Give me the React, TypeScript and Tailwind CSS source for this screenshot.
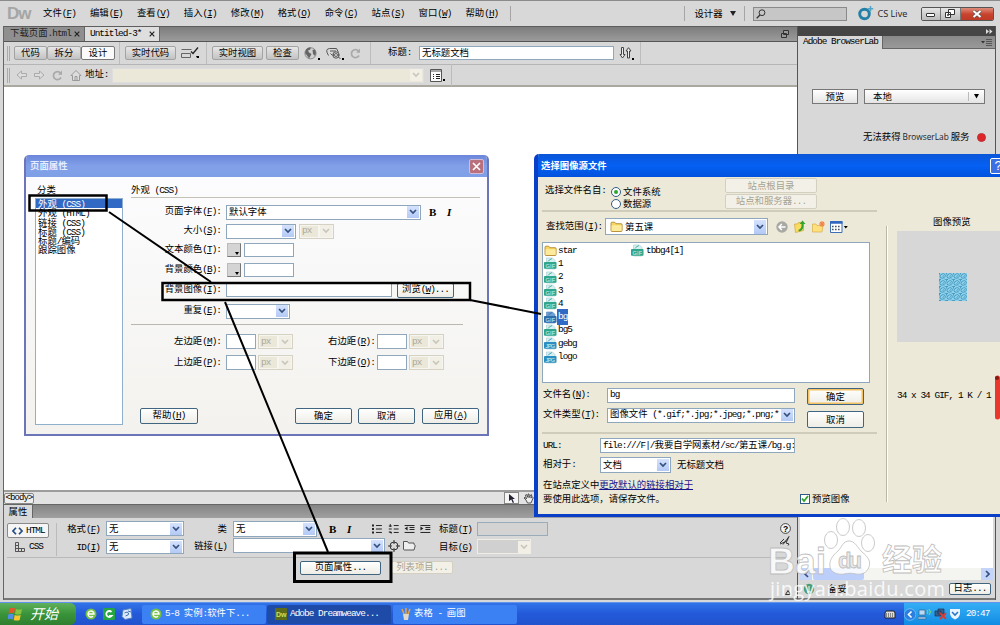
import React from 'react';
import clsx from 'clsx';

const menus = ['文件(F)', '编辑(E)', '查看(V)', '插入(I)', '修改(M)', '格式(O)', '命令(C)', '站点(S)', '窗口(W)', '帮助(H)'];
const categories = ['外观 (CSS)', '外观 (HTML)', '链接 (CSS)', '标题 (CSS)', '标题/编码', '跟踪图像'];
const files = [
  { name: 'star', kind: 'DIR' },
  { name: '1', kind: 'GIF' },
  { name: '2', kind: 'GIF' },
  { name: '3', kind: 'GIF' },
  { name: '4', kind: 'GIF' },
  { name: 'bg', kind: 'GIF', selected: true },
  { name: 'bg5', kind: 'GIF' },
  { name: 'gebg', kind: 'JPG' },
  { name: 'logo', kind: 'JPG' },
];

interface BoxProps {
  className?: string;
  children?: React.ReactNode;
}

// Half-width runs are set in a tightened mono so two letters equal one Han character.
// A single letter in parentheses is the access key.
function Txt({ children, className }: { children: string; className?: string }) {
  const parts = children.split(/([\x20-\x7e]+)/);
  return (
    <span className={clsx('pb-[2px] whitespace-pre', className)}>
      {parts.map((part, i) => {
        if (i % 2 === 0) return part;
        const key = part.match(/^(.*\()([A-Z])(\).*)$/);
        return (
          <span key={i} className="font-['Liberation_Mono',monospace] tracking-[-0.1em]">
            {key ? (
              <>
                {key[1]}
                <span className="underline underline-offset-1">{key[2]}</span>
                {key[3]}
              </>
            ) : (
              part
            )}
          </span>
        );
      })}
    </span>
  );
}

function Chevron({ disabled, className }: { disabled?: boolean; className?: string }) {
  return (
    <span
      className={clsx(
        'flex shrink-0 items-center justify-center',
        disabled ? 'bg-[#f1efe6]' : 'bg-linear-to-b from-[#d5e2fd] to-[#b3c9f5]',
        className || 'h-[12px] w-[12px]'
      )}
    >
      <svg width="8" height="6" viewBox="0 0 8 6" fill="none" stroke={disabled ? '#c9c7ba' : '#34507f'} strokeWidth="1.7">
        <path d="M1 1l3 3 3-3" />
      </svg>
    </span>
  );
}

function Select({ value, className }: { value?: string; className?: string }) {
  return (
    <div className={clsx('flex shrink-0 items-center justify-between overflow-hidden border border-[#8fa7bd] bg-white pr-px pl-[2px]', className)}>
      <Txt>{value || ''}</Txt>
      <Chevron />
    </div>
  );
}

function Unit({ className }: BoxProps) {
  return (
    <div className={clsx('flex h-[15px] w-[35px] shrink-0 items-center justify-between border border-[#d5d2c4] bg-[#f6f5ef] pr-px pl-px text-[#aaa89a]', className)}>
      <span className="flex h-[11px] w-[17px] items-center bg-[#ebe8d9] pl-px">
        <Txt>px</Txt>
      </span>
      <Chevron disabled />
    </div>
  );
}

function Input({ className, children }: BoxProps) {
  return (
    <div className={clsx('flex shrink-0 items-center overflow-hidden border border-[#8fa7bd] bg-white pl-[2px]', className)}>{children}</div>
  );
}

function XpButton({ className, children }: { className?: string; children: string }) {
  return (
    <button
      className={clsx(
        'flex shrink-0 items-center justify-center rounded-[2px] border border-[#3f6580] bg-linear-to-b from-white to-[#eeede6]',
        className
      )}
    >
      <Txt>{children}</Txt>
    </button>
  );
}

function DimButton({ className, children }: { className?: string; children: string }) {
  return (
    <div className={clsx('flex shrink-0 items-center justify-center rounded-[2px] border border-[#d3d0c1] bg-[#f3f1e7] text-[#a5a394]', className)}>
      <Txt>{children}</Txt>
    </div>
  );
}

function ToolButton({ className, children }: BoxProps) {
  return (
    <div className={clsx('flex h-[14px] shrink-0 items-center justify-center rounded-[2px] border border-[#a3a3a3] bg-linear-to-b from-[#e6e6e6] to-[#c3c3c3]', className)}>
      {children}
    </div>
  );
}

function Sep({ className }: BoxProps) {
  return <div className={clsx('w-px shrink-0 bg-[#a5a5a5]', className)} />;
}

function Grip() {
  return <div className="ml-[3px] h-[15px] w-[3px] shrink-0 border-x border-[#aaa]" />;
}

function BoldItalic({ className }: BoxProps) {
  return (
    <div className={clsx("flex items-center font-['Liberation_Serif',serif] text-[11px] leading-none", className)}>
      <span className="w-[18px] font-black">B</span>
      <span className="font-bold italic">I</span>
    </div>
  );
}

function Swatch() {
  return (
    <div className="flex h-[14px] w-[14px] shrink-0 items-end justify-end border border-t-[#bbb] border-r-[#777] border-b-[#777] border-l-[#bbb] bg-[#d4d4d4] p-px">
      <svg width="4" height="3" viewBox="0 0 4 3">
        <path d="M0 0h4L2 3z" />
      </svg>
    </div>
  );
}

function Folder({ size = 13 }: { size?: number }) {
  return (
    <svg width={size} height={size} viewBox="0 0 13 13" className="shrink-0">
      <path d="M1 3.2q0-1 1-1h2.700l1.200 1.500h5.200q1 0 1 1v5.800q0 1-1 1H2q-1 0-1-1z" fill="#f7d661" stroke="#a97e1f" strokeWidth=".8" />
      <path d="M1.600 5.200h10v5.200q0 .6-.6.600h-8.800q-.6 0-.6-.6z" fill="#fdeb9b" />
    </svg>
  );
}

function FileIcon({ kind, selected }: { kind: string; selected?: boolean }) {
  if (kind === 'DIR') return <Folder />;
  const label = selected ? '#2e6cae' : kind === 'GIF' ? '#2fa58c' : '#2a8fc0';
  return (
    <svg width="13" height="13" viewBox="0 0 13 13" className="shrink-0">
      <path d="M2.500 1h6l2.500 2.500V12h-8.500z" fill={selected ? '#6fa0d4' : '#d8eff2'} stroke={selected ? '#4b7fbb' : '#9cc9cf'} strokeWidth=".6" />
      <path d="M4 4.500c1-2 3-2 4-3" stroke={label} strokeWidth=".8" fill="none" />
      <rect x="0" y="5" width="12.500" height="6.800" rx=".8" fill={label} />
      <text x="6.300" y="10.500" textAnchor="middle" fontSize="5.600" fontFamily="Liberation Sans" fill="#dff5ef" textLength="9.500">
        {kind}
      </text>
    </svg>
  );
}

function Refresh() {
  return (
    <svg width="11" height="11" viewBox="0 0 11 11" fill="none" stroke="#a9a9a9" strokeWidth="1.700">
      <path d="M9 7.500A4 4 0 1 1 8.500 3" />
      <path d="M10 .5v4.200H6z" fill="#a9a9a9" stroke="none" />
    </svg>
  );
}

function TinyDown({ className }: BoxProps) {
  return <span className={clsx('h-[2px] w-[2px] shrink-0 self-end bg-black', className || 'mb-[4px]')} />;
}

function MenuBar() {
  return (
    <div className="flex h-[26px] shrink-0 items-center border-t border-[#8b8b8b] bg-[#d8d8d8]">
      <div className="w-[43px] pl-[7px] font-['Liberation_Sans',sans-serif] text-[17px] leading-none font-bold tracking-[-1px] text-[#a5a5a5]">Dw</div>
      {menus.map(m => (
        <div key={m} className="flex w-[46.95px] shrink-0">
          <Txt>{m}</Txt>
        </div>
      ))}
      <Sep className="-ml-[2px] h-[15px]" />
      <Sep className="ml-[173px] h-[15px]" />
      <Txt className="ml-[9px]">设计器</Txt>
      <svg className="ml-[7px]" width="6" height="5" viewBox="0 0 6 5">
        <path d="M0 0h6L3 5z" fill="#222" />
      </svg>
      <Sep className="ml-[8px] h-[15px]" />
      <div className="ml-[8px] flex h-[14px] w-[94px] items-center border border-[#8a8a8a] bg-[#c6c6c6] pl-[2px]">
        <svg width="10" height="10" viewBox="0 0 10 10" fill="none" stroke="#333">
          <circle cx="6" cy="3.700" r="2.900" />
          <path d="M4 6L.7 9.300" strokeWidth="1.300" />
        </svg>
      </div>
      <svg className="ml-[11px]" width="16" height="15" viewBox="0 0 16 15">
        <circle cx="6.500" cy="8" r="4.800" fill="none" stroke="#2580a7" strokeWidth="2.900" />
        <path d="M12.500 0v5.500M9.800 2.700h5.400" stroke="#53a3c4" strokeWidth="1.500" />
      </svg>
      <span className="ml-[4px] w-[30px] font-['Open_Sans',sans-serif] text-[9.100px] whitespace-nowrap text-[#222]">CS Live</span>
      <div className="ml-[13px] flex h-[14px] w-[73px] shrink-0 overflow-hidden rounded-[2px] border border-[#555]">
        <div className="flex w-[19px] items-center justify-center border-r border-[#777] bg-linear-to-b from-[#e6e6e6] to-[#bbb]">
          <span className="mt-[2px] h-[4px] w-[9px] rounded-[1px] border border-[#333] bg-white" />
        </div>
        <div className="flex w-[20px] items-center justify-center border-r border-[#777] bg-linear-to-b from-[#e6e6e6] to-[#bbb]">
          <svg width="10" height="9" viewBox="0 0 10 9" fill="#fff" stroke="#333">
            <path d="M3.500.5h6v5h-6zM.5 3.500h5v5h-5z" />
            <path d="M2.500 5.500h1v1h-1z" />
          </svg>
        </div>
        <div className="flex flex-1 items-center justify-center bg-linear-to-b from-[#dd8c7c] via-[#c9442e] to-[#bd3a26]">
          <svg width="10" height="8" viewBox="0 0 10 8">
            <path d="M1.500 1l7 6M8.500 1l-7 6" stroke="#555" strokeWidth="3.200" />
            <path d="M1.500 1l7 6M8.500 1l-7 6" stroke="#fff" strokeWidth="2" />
          </svg>
        </div>
      </div>
    </div>
  );
}

function TabClose() {
  return (
    <svg className="mr-[4px] ml-auto" width="6" height="6" viewBox="0 0 6 6" stroke="#222" strokeWidth="1.200">
      <path d="M.7.7l4.600 4.600M5.300.7L.7 5.300" />
    </svg>
  );
}

function DocumentTabs() {
  return (
    <div className="flex h-[16px] shrink-0 border-t border-b border-t-[#5e5e5e] border-b-[#555] bg-linear-to-b from-[#7d7d7d] to-[#9b9b9b]">
      <div className="flex w-[81px] items-center border-r border-[#666] bg-[#8f8f8f] pl-[6px] text-[#222]">
        <Txt>下载页面.html</Txt>
        <TabClose />
      </div>
      <div className="flex w-[75px] items-center border-r border-[#666] bg-[#dedede] pl-[5px]">
        <Txt>Untitled-3*</Txt>
        <TabClose />
      </div>
      <svg className="mt-[3px] mr-[8px] ml-auto" width="8" height="8" viewBox="0 0 8 8" fill="#9a9a9a" stroke="#333">
        <path d="M2.500.5h5v4h-5zM.5 3.500h5v4h-5z" />
      </svg>
    </div>
  );
}

function Toolbars() {
  return (
    <>
      <div className="flex h-[23px] shrink-0 items-center border-b border-[#b5b5b5] bg-[#d8d8d8]">
        <Grip />
        <ToolButton className="ml-[4px] w-[33px]"><Txt>代码</Txt></ToolButton>
        <ToolButton className="w-[34px]"><Txt>拆分</Txt></ToolButton>
        <div className="flex h-[14px] w-[34px] items-center justify-center rounded-[2px] border border-[#777] bg-[#fafafa]"><Txt>设计</Txt></div>
        <Sep className="ml-[4px] h-[22px] bg-[#bcbcbc]" />
        <ToolButton className="ml-[5px] w-[51px]"><Txt>实时代码</Txt></ToolButton>
        <svg className="ml-[5px]" width="18" height="12" viewBox="0 0 18 12" fill="none" stroke="#666">
          <path d="M.5 2.500h10M.5 6.500h9v4h-9z" />
          <path d="M10 4.500l2 2 5-6" stroke="#222" strokeWidth="1.300" />
          <path d="M15 9h3v2h-2z" fill="#000" stroke="none" />
        </svg>
        <Sep className="ml-[7px] h-[22px] bg-[#bcbcbc]" />
        <ToolButton className="ml-[5px] w-[51px]"><Txt>实时视图</Txt></ToolButton>
        <ToolButton className="ml-[3px] w-[33px]"><Txt>检查</Txt></ToolButton>
        <svg className="ml-[5px]" width="14" height="13" viewBox="0 0 14 13">
          <circle cx="6.500" cy="6.300" r="5.600" fill="#d0d0d0" stroke="#777" strokeWidth=".8" />
          <path d="M2 2.500q2-2.500 5-1.800l-1 2-2 .8 1 2 2.500 1.500-1 2-1.500 2.500-2-3L1 6zM8.500 3l2.500-.5 1 3.500-1 3-2-2z" fill="#666" />
        </svg>
        <TinyDown />
        <svg className="ml-[6px]" width="16" height="13" viewBox="0 0 16 13" fill="none" stroke="#555">
          <path d="M2.500 8.500q-4-6.500 1-7h7l2 4M4 4h6M4.500 6.500l2 2" />
          <circle cx="10" cy="8" r="3.200" fill="#ddd" />
          <path d="M7 8q3-3 6 0-3 3-6 0M12.500 10l2 2" />
        </svg>
        <TinyDown />
        <div className="ml-[6px]"><Refresh /></div>
        <Sep className="ml-[9px] h-[22px] bg-[#bcbcbc]" />
        <Txt className="ml-[17px] w-[30px]">标题:</Txt>
        <Input className="ml-px h-[14px] w-[195px] pl-0"><Txt className="-mt-px leading-[10px]">无标题文档</Txt></Input>
        <svg className="ml-[5px]" width="13" height="12" viewBox="0 0 13 12" fill="#eee" stroke="#444">
          <path d="M2.500.5h2v7h1.500l-2.500 3.500L1 7.500h1.500zM8.500 11h2V4h1.500L9.500.7 7 4h1.500z" />
        </svg>
        <TinyDown />
        <Sep className="ml-[6px] h-[22px] bg-[#bcbcbc]" />
      </div>
      <div className="flex h-[22px] shrink-0 items-center border-b-2 border-[#aaa89f] bg-[#d8d8d8]">
        <Grip />
        <svg className="ml-[6px]" width="29" height="10" viewBox="0 0 29 10" fill="#ddd" stroke="#aaa">
          <path d="M1 5l4.500-4v2.500h5v3h-5V9zM28 5l-4.500-4v2.500h-5v3h5V9z" />
        </svg>
        <div className="ml-[7px]"><Refresh /></div>
        <svg className="ml-[7px]" width="12" height="11" viewBox="0 0 12 11" fill="#ddd" stroke="#999">
          <path d="M1 5.500l5-5 5 5H9.500v5h-7v-5zM5 10.500v-4h2v4" />
        </svg>
        <Txt className="ml-[3px] w-[27px]">地址:</Txt>
        <div className="flex h-[15px] w-[312px] items-center justify-end border border-[#ddd] bg-[#ebe8d9] pr-px"><Chevron disabled /></div>
        <svg className="ml-[6px]" width="13" height="13" viewBox="0 0 13 13" fill="#fafafa" stroke="#555">
          <path d="M.5.5h11v12H.5zM1 2h10" />
          <path d="M3 5.500h1M6 5.500h4M3 7.500h1M6 7.500h4M3 9.500h1M6 9.500h4" stroke="#222" />
        </svg>
        <TinyDown />
        <Sep className="ml-[6px] h-[22px] bg-[#bcbcbc]" />
      </div>
    </>
  );
}

function PropertiesPanel() {
  return (
    <>
      <div className="flex h-[14px] shrink-0 items-center border-t-2 border-[#9c9c9c] bg-[#e2e2e2]">
        <div className="flex h-[11px] w-[30px] items-center justify-center rounded-[2px] border border-[#888] bg-[#eee]"><Txt className="text-[9px]">{'<body>'}</Txt></div>
        <div className="ml-[470px] flex h-[12px] w-[15px] items-center justify-center border border-[#888] bg-[#f5f5f5]">
          <svg width="6" height="9" viewBox="0 0 6 9"><path d="M0 0l6 5H3.500L5 8.500l-1.200.5L2.300 5.600 0 7z" fill="#223" /></svg>
        </div>
        <svg className="ml-[4px]" width="11" height="11" viewBox="0 0 11 11" fill="#eee" stroke="#444" strokeWidth=".9">
          <path d="M3 7L1 5l1-.7L3.500 6 2.500 2l1-.5L5 4.500V1h1l.3 3.500L8 1.500l.8.500-1 3L9.500 4l.8.500L8 10H4.500z" />
        </svg>
      </div>
      <div className="flex h-[14px] shrink-0 border-t border-[#666] bg-linear-to-b from-[#858585] to-[#a0a0a0]">
        <div className="flex w-[29px] items-center justify-center border-r border-[#666] bg-[#d8d8d8]"><Txt>属性</Txt></div>
      </div>
      <div className="flex h-[82px] shrink-0 flex-col border-b-2 border-[#777] bg-[#d8d8d8] pr-[6px] pl-[3px]">
        <div className="flex h-[40px] shrink-0 border-b border-[#b9b9b9]">
          <div className="w-[42px] pt-[5px]">
            <div className="flex h-[15px] items-center gap-[3px] rounded-[2px] border border-[#8a8a8a] bg-[#f5f5f5] pl-[4px]">
              <svg width="11" height="8" viewBox="0 0 11 8" fill="none" stroke="#264e82" strokeWidth="1.700"><path d="M4 .7L1 4l3 3.300M7 .7L10 4 7 7.300" /></svg>
              <Txt>HTML</Txt>
            </div>
            <div className="flex h-[17px] items-center gap-[4px] pl-[7px]">
              <svg width="11" height="10" viewBox="0 0 11 10" fill="none" stroke="#555"><path d="M1.500.5h3v9h-3zM1.500 3.500h3M1.500 6.500h9v3h-9M7.500 6.500v3" /></svg>
              <Txt>CSS</Txt>
            </div>
          </div>
          <Sep className="mt-[5px] ml-[7px] h-[33px] bg-[#bbb]" />
          <div className="w-[43px] text-right">
            <div className="mt-[3px] h-[15px] leading-[14px]"><Txt>格式(F)</Txt></div>
            <div className="mt-[3px] h-[15px] leading-[14px]"><Txt>ID(I)</Txt></div>
          </div>
          <div className="ml-[6px] pt-[3px]">
            <Select value="无" className="h-[15px] w-[78px]" />
            <Select value="无" className="mt-[3px] h-[15px] w-[78px]" />
          </div>
          <div className="w-[43px] text-right">
            <div className="mt-[3px] h-[15px] leading-[14px]"><Txt>类</Txt></div>
            <div className="mt-[2px] h-[15px] leading-[14px]"><Txt>链接(L)</Txt></div>
          </div>
          <div className="ml-[6px] flex w-[200px] flex-col pt-[3px]">
            <div className="flex items-center">
              <Select value="无" className="h-[16px] w-[84px]" />
              <BoldItalic className="ml-[12px] w-[24px]" />
              <svg className="ml-[19px]" width="62" height="10" viewBox="0 0 62 10" stroke="#222" fill="#222">
                <path d="M0 1.500h2M0 5h2M0 8.500h2" strokeWidth="2" />
                <path d="M4 1.500h6M4 5h6M4 8.500h6M22 1.500h5M22 5h5M22 8.500h5M17 2h3M18.500 0v3M17 5h3M17 8h2.500v1.500" />
                <path d="M33 1.500h10M38 3.500h5M38 5.500h5M33 8.500h10M49 1.500h10M54 3.500h5M54 5.500h5M49 8.500h10" />
                <path d="M36 2.500v4L33 4.500zM49 2.500v4l3-2z" stroke="none" />
              </svg>
            </div>
            <div className="mt-px flex items-center">
              <Select className="h-[15px] w-[152px]" />
              <svg className="ml-[3px]" width="12" height="12" viewBox="0 0 12 12" fill="none" stroke="#333">
                <circle cx="6" cy="6" r="4" />
                <path d="M6 0v4M6 8v4M0 6h4M8 6h4" />
              </svg>
              <svg className="ml-[3px]" width="13" height="11" viewBox="0 0 13 11" fill="#eee" stroke="#555">
                <path d="M.5 9.500v-8h4l1 1.500h5.500v1.500l1.300 1L11 10H1z" />
              </svg>
            </div>
          </div>
          <div className="ml-[6px] w-[38px]">
            <div className="mt-[3px] h-[15px] leading-[14px]"><Txt>标题(T)</Txt></div>
            <div className="mt-[3px] h-[15px] leading-[14px]"><Txt>目标(G)</Txt></div>
          </div>
          <div className="pt-[4px]">
            <div className="h-[14px] w-[71px] border border-[#9aabba] bg-[#d3d3d3]" />
            <div className="mt-[3px] flex h-[15px] w-[54px] items-center justify-end border border-[#f0eee4] bg-[#d0d0d0]"><Chevron disabled /></div>
          </div>
          <div className="ml-auto flex w-[12px] flex-col items-center pt-[5px]">
            <svg width="11" height="11" viewBox="0 0 11 11">
              <circle cx="5.500" cy="5.500" r="4.900" fill="#f4f4f4" stroke="#333" strokeWidth=".9" />
              <text x="5.500" y="8.500" textAnchor="middle" fontSize="8.500" fontWeight="bold" fontFamily="Liberation Sans">?</text>
            </svg>
            <svg className="mt-[2px]" width="12" height="10" viewBox="0 0 12 10" fill="#ddd" stroke="#333"><path d="M1 8l5-2 4-5.500L7 7l3 1-1 1.500M1 7l4-4M4 8.500l3-4" /></svg>
          </div>
        </div>
        <div className="flex pt-[3px]">
          <XpButton className="ml-[293px] h-[14px] w-[81px]">页面属性...</XpButton>
          <DimButton className="ml-[10px] h-[13px] w-[62px]">列表项目...</DimButton>
        </div>
        <svg className="mt-auto mb-[3px] ml-auto" width="6" height="5" viewBox="0 0 6 5" stroke="#333" fill="none"><path d="M.5 4.500l2.500-4 2.500 4z" /></svg>
      </div>
    </>
  );
}

function BrowserLabPanel() {
  return (
    <div className="flex w-[199px] shrink-0 flex-col border-r border-l border-[#555] bg-[#d8d8d8]">
      <div className="flex h-[10px] shrink-0 items-center justify-end bg-[#454545] pr-[2px]">
        <svg width="7" height="5" viewBox="0 0 7 5" fill="#ddd"><path d="M0 0l3 2.500L0 5zM3.500 0l3 2.500-3 2.500z" /></svg>
      </div>
      <div className="flex h-[13px] shrink-0 items-center border-b border-[#666] bg-linear-to-b from-[#888] to-[#999]">
        <div className="flex h-[13px] w-[85px] items-center border-r border-[#666] bg-[#d8d8d8] pl-[5px]"><Txt>Adobe BrowserLab</Txt></div>
        <svg className="mr-[3px] ml-auto" width="11" height="7" viewBox="0 0 11 7" stroke="#555"><path d="M0 2h4L2 4.500z" fill="#333" stroke="none" /><path d="M5 .5h6M5 2.500h6M5 4.500h6M5 6.500h6" /></svg>
      </div>
      <div className="mt-[40px] flex gap-[6px] pl-[14px]">
        <div className="flex h-[15px] w-[46px] items-center justify-center border border-[#777] bg-linear-to-b from-white to-[#e4e4e4]"><Txt>预览</Txt></div>
        <div className="flex h-[15px] w-[121px] items-center border border-[#777] bg-linear-to-b from-white to-[#e4e4e4] pl-[8px]">
          <Txt>本地</Txt>
          <Sep className="ml-auto h-[9px] bg-[#bbb]" />
          <svg className="mx-[5px]" width="5" height="5" viewBox="0 0 5 5"><path d="M0 0h5L2.500 4.500z" /></svg>
        </div>
      </div>
      <div className="mt-[26px] flex items-center pl-[65px] whitespace-nowrap">
        <Txt>无法获得</Txt>
        <span className="mx-[2px] font-['Open_Sans',sans-serif] text-[8.300px] text-[#222]">BrowserLab</span>
        <Txt>服务</Txt>
        <span className="ml-[8px] h-[9px] w-[9px] rounded-full border border-[#b33] bg-[#e0252a]" />
      </div>
      <div className="mt-auto flex h-[83px] flex-col">
        <div className="mx-[2px] flex h-[63px] flex-col bg-white">
          <div className="mt-auto flex h-[12px] bg-[#f4f4f0]">
            <div className="flex w-[12px] items-center justify-center bg-[#c5d5fa] text-[#34507f]"><svg width="5" height="8" viewBox="0 0 5 8" fill="none" stroke="#34507f" strokeWidth="1.700"><path d="M4 1L1 4l3 3" /></svg></div>
            <div className="ml-px w-[51px] rounded-[2px] bg-[#bccffa]" />
            <div className="ml-auto flex w-[12px] items-center justify-center bg-[#c5d5fa]"><svg width="5" height="8" viewBox="0 0 5 8" fill="none" stroke="#34507f" strokeWidth="1.700"><path d="M1 1l3 3-3 3" /></svg></div>
          </div>
        </div>
        <div className="flex h-[20px] items-center border-b-2 border-[#777] pr-[4px]">
          <svg className="ml-[5px]" width="12" height="12" viewBox="0 0 11 12"><circle cx="5.500" cy="6" r="5.200" fill="#4d9c78" /><path d="M5.500 3v6M3.500 9h4" stroke="#fff" /></svg>
          <Txt className="ml-[13px]">备妥</Txt>
          <XpButton className="ml-auto h-[12px] w-[42px]">日志...</XpButton>
        </div>
      </div>
    </div>
  );
}

function Field({ label, className, children }: { label: string; className: string; children: React.ReactNode }) {
  return (
    <div className={clsx('flex shrink-0 items-center', className)}>
      <div className="flex w-[90px] shrink-0 justify-end"><Txt>{label}</Txt></div>
      <div className="ml-[5px] flex items-center">{children}</div>
    </div>
  );
}

function PagePropertiesDialog() {
  return (
    <div className="absolute top-[155px] left-[24px] flex h-[281px] w-[465px] flex-col overflow-hidden rounded-t-[5px] border-x-2 border-b-2 border-[#6d75b9]">
      <div className="flex h-[22px] shrink-0 items-center justify-between bg-linear-to-b from-[#6b86da] via-[#82a0e8] to-[#7e9fe6] pr-[3px] pl-[4px] font-bold text-[#e4ecff]">
        <Txt>页面属性</Txt>
        <div className="flex h-[15px] w-[15px] items-center justify-center rounded-[2px] border border-[#d3bcd9] bg-[#b9707d]">
          <svg width="9" height="9" viewBox="0 0 9 9" stroke="#fff" strokeWidth="1.600"><path d="M1 1l7 7M8 1L1 8" /></svg>
        </div>
      </div>
      <div className="flex flex-1 bg-linear-to-b from-[#fcfcfe] to-[#f3f2ee]">
        <div className="w-[97px] shrink-0 pl-[9px]">
          <div className="mt-[6px] h-[15px] pl-[2px] leading-[12px]"><Txt>分类</Txt></div>
          <div className="h-[227px] w-[88px] border border-[#8fb0cc] bg-white leading-[9.300px]">
            {categories.map((c, i) => (
              <div key={c} className={clsx('h-[9.300px] pl-[2px]', i === 0 && 'bg-[#316ac5] text-white')}><Txt>{c}</Txt></div>
            ))}
          </div>
        </div>
        <div className="flex w-[360px] flex-col pl-[8px]">
          <div className="mt-[6px] h-[15px] w-[349px] border-b border-[#c4c2b8] leading-[12px]"><Txt>外观 (CSS)</Txt></div>
          <div className="h-[4px]" />
          <Field label="页面字体(F):" className="h-[20px]">
            <Select value="默认字体" className="h-[15px] w-[195px]" />
            <BoldItalic className="ml-[8px]" />
          </Field>
          <Field label="大小(S):" className="h-[18px]">
            <Select className="h-[15px] w-[70px]" />
            <Unit className="ml-[3px]" />
          </Field>
          <Field label="文本颜色(T):" className="h-[20px]">
            <div className="mr-[3px] pl-px"><Swatch /></div>
            <Input className="h-[14px] w-[50px]" />
          </Field>
          <Field label="背景颜色(B):" className="h-[20px]">
            <div className="mr-[3px] pl-px"><Swatch /></div>
            <Input className="h-[14px] w-[50px]" />
          </Field>
          <Field label="背景图像(I):" className="h-[20px]">
            <Input className="h-[14px] w-[166px]" />
            <XpButton className="ml-[5px] h-[15px] w-[57px]">浏览(W)...</XpButton>
          </Field>
          <Field label="重复(E):" className="h-[22px]">
            <Select className="h-[15px] w-[64px]" />
          </Field>
          <div className="mt-[2px] mb-[6px] h-px w-[332px] shrink-0 bg-[#b9b7ae]" />
          {[['左边距(M):', '右边距(R):'], ['上边距(P):', '下边距(O):']].map(([left, right]) => (
            <Field key={left} label={left} className="h-[21px]">
              <Input className="h-[15px] w-[30px]" />
              <Unit className="ml-[2px]" />
              <Txt className="ml-[35px] w-[49px]">{right}</Txt>
              <Input className="h-[15px] w-[30px]" />
              <Unit className="ml-[2px]" />
            </Field>
          ))}
          <div className="mt-[35px] flex pl-[9px]">
            <XpButton className="h-[16px] w-[58px]">帮助(H)</XpButton>
            <XpButton className="ml-[97px] h-[16px] w-[57px]">确定</XpButton>
            <XpButton className="ml-[6px] h-[16px] w-[57px]">取消</XpButton>
            <XpButton className="ml-[7px] h-[16px] w-[57px]">应用(A)</XpButton>
          </div>
        </div>
      </div>
    </div>
  );
}

function Radio({ label, checked }: { label: string; checked?: boolean }) {
  return (
    <div className="flex h-[12px] items-center gap-[2px]">
      <span className="flex h-[10px] w-[10px] items-center justify-center rounded-full border border-[#2f5d85] bg-white">
        {checked && <span className="h-[4px] w-[4px] rounded-full bg-[#2fa52f]" />}
      </span>
      <Txt>{label}</Txt>
    </div>
  );
}

function SelectImageDialog() {
  return (
    <div className="absolute top-[154px] left-[534px] flex h-[363px] w-[480px] flex-col overflow-hidden rounded-tl-[5px] border-b-3 border-l-4 border-[#0a3fc8] bg-[#ece9d8]">
      <div className="flex h-[23px] shrink-0 items-center bg-linear-to-b from-[#0b56d8] via-[#0560f4] to-[#0052dc] pl-[3px] font-bold text-white">
        <Txt className="w-[449px]">选择图像源文件</Txt>
        <div className="flex h-[16px] w-[16px] shrink-0 items-center justify-center rounded-[2px] border border-white bg-[#3b70e3] font-['Liberation_Sans'] text-[13px] leading-none font-normal">?</div>
      </div>
      <div className="flex min-h-0 flex-1">
        <div className="flex w-[340px] shrink-0 flex-col pl-[4px]">
          <div className="flex h-[35px] w-[335px] shrink-0 border-b-2 border-[#cfccbb] pl-[3px]">
            <Txt className="mt-[6px] w-[66px]">选择文件名自:</Txt>
            <div className="mt-[9px] w-[114px]">
              <Radio label="文件系统" checked />
              <Radio label="数据源" />
            </div>
            <div className="flex flex-col gap-px pt-px">
              <DimButton className="h-[15px] w-[92px]">站点根目录</DimButton>
              <DimButton className="h-[15px] w-[92px]">站点和服务器...</DimButton>
            </div>
          </div>
          <div className="mt-[6px] flex h-[17px] shrink-0 items-center pl-[4px]">
            <Txt className="w-[59px]">查找范围(I):</Txt>
            <div className="flex h-[17px] w-[163px] items-center border border-[#8fa7bd] bg-white pr-px pl-[4px]">
              <Folder />
              <Txt className="ml-[2px]">第五课</Txt>
              <Chevron className="ml-auto h-[14px] w-[12px]" />
            </div>
            <svg className="ml-[8px]" width="12" height="12" viewBox="0 0 12 12"><circle cx="6" cy="6" r="5.700" fill="#a9a9a4" /><path d="M9.500 6H3M5.800 3L3 6l2.800 3" stroke="#fff" strokeWidth="1.500" fill="none" /></svg>
            <svg className="ml-[6px]" width="12" height="13" viewBox="0 0 12 13"><path d="M.5 4h3l1-1.500h5v8l-8 2z" fill="#fbdc5e" stroke="#c79a2b" strokeWidth=".6" /><path d="M4 10q4-1 3.500-6H5.500L8.500.5l3 3.500h-2q.5 6-4 7.500z" fill="#33a52f" /></svg>
            <svg className="ml-[6px]" width="13" height="12" viewBox="0 0 13 12"><path d="M.5 3h3.500l1 1.500h6l-1 6.500H.5z" fill="#fde07c" stroke="#d3a53c" strokeWidth=".6" /><path d="M10 0v6M7 3h6M8 1l4 4M12 1L8 5" stroke="#f0854b" strokeWidth="1.100" /></svg>
            <svg className="ml-[5px]" width="18" height="12" viewBox="0 0 18 12"><path d="M.5.500h11.500v11H.5z" fill="#fff" stroke="#3b6fb7" /><path d="M0 1.500h12.500" stroke="#2f67c0" strokeWidth="2.500" /><path d="M2 5.500h9M2 8.500h9" stroke="#456" strokeWidth="1.500" strokeDasharray="1.600 1.400" /><path d="M13.800 5h4l-2 2.500z" /></svg>
          </div>
          <div className="mt-[7px] flex h-[141px] w-[328px] shrink-0 border border-[#8fa7bd] bg-white pt-px">
            <div className="w-[88px] pl-px">
              {files.map(f => (
                <div key={f.name} className="flex h-[13.300px] items-center">
                  <FileIcon kind={f.kind} selected={f.selected} />
                  <Txt className={clsx(f.selected ? 'bg-[#316ac5] px-px text-white' : 'ml-px')}>{f.name}</Txt>
                </div>
              ))}
            </div>
            <div className="flex h-[13px] items-center gap-[2px]">
              <FileIcon kind="GIF" />
              <Txt>tbbg4[1]</Txt>
            </div>
          </div>
          <div className="mt-[4px] flex h-[47px] w-[335px] shrink-0 border-b-2 border-[#cfccbb]">
            <div className="flex flex-col gap-[4px]">
              <div className="flex items-center pl-px">
                <Txt className="w-[64px]">文件名(N):</Txt>
                <Input className="h-[15px] w-[188px]"><Txt>bg</Txt></Input>
              </div>
              <div className="flex items-center pl-px">
                <Txt className="w-[64px]">文件类型(T):</Txt>
                <Select value="图像文件 (*.gif;*.jpg;*.jpeg;*.png;*" className="h-[15px] w-[188px]" />
              </div>
            </div>
            <div className="ml-[12px] flex flex-col gap-[6px] pt-px">
              <XpButton className="h-[17px] w-[57px] shadow-[inset_0_0_0_1.5px_#f3c264]">确定</XpButton>
              <XpButton className="h-[17px] w-[57px]">取消</XpButton>
            </div>
          </div>
          <div className="mt-[4px] flex h-[15px] shrink-0 items-center pl-px">
            <Txt className="w-[57px]">URL:</Txt>
            <Input className="h-[15px] w-[195px]"><Txt>file:///F|/我要自学网素材/sc/第五课/bg.g:</Txt></Input>
          </div>
          <div className="mt-[4px] flex h-[16px] shrink-0 items-center pl-px">
            <Txt className="w-[57px]">相对于:</Txt>
            <Select value="文档" className="h-[16px] w-[71px]" />
            <Txt className="ml-[6px]">无标题文档</Txt>
          </div>
          <div className="mt-[5px] h-[13px] shrink-0 pl-px leading-[13px]">
            <Txt>在站点定义中</Txt>
            <Txt className="text-[#15158c] underline underline-offset-1">更改默认的链接相对于</Txt>
          </div>
          <div className="flex h-[16px] shrink-0 items-center pl-px">
            <Txt className="w-[257px]">要使用此选项，请保存文件。</Txt>
            <span className="flex h-[10px] w-[10px] items-center justify-center border border-[#2f5d85] bg-white">
              <svg width="8" height="8" viewBox="0 0 8 8" fill="none" stroke="#2fa52f" strokeWidth="1.800"><path d="M1 3.500l2 2.500 4-5" /></svg>
            </span>
            <Txt className="ml-[2px]">预览图像</Txt>
          </div>
        </div>
        <div className="mt-[49px] ml-[8px] h-[276px] w-[2px] shrink-0 border-l border-[#bab7a6] bg-white" />
        <div className="flex w-[130px] shrink-0 flex-col pl-[9px]">
          <Txt className="mt-[38px] h-[16px] pl-[36px]">图像预览</Txt>
          <div className="flex h-[111px] w-[120px] items-center bg-[#d7d7d7] pl-[42px]">
            <svg width="28" height="28" viewBox="0 0 28 28">
              <defs>
                <pattern id="swirl" width="7" height="7" patternUnits="userSpaceOnUse">
                  <rect width="7" height="7" fill="#8fd0ea" />
                  <path d="M3.500 3.500q1-1.500 1.700 0t-1.700 1.700-2.500-1.700T3.500.8t3 2.700M0 6.500h2M5.500 6l1.500 1M.5 0v1.500" fill="none" stroke="#348fb8" strokeWidth=".8" />
                </pattern>
              </defs>
              <rect width="28" height="28" fill="url(#swirl)" />
            </svg>
          </div>
          <div className="mt-[46px] flex">
            <Txt>34 x 34 GIF, 1 K / 1 </Txt>
          </div>
        </div>
      </div>
    </div>
  );
}

function Task({ className, children }: BoxProps) {
  return <div className={clsx('flex h-[19px] w-[124px] shrink-0 items-center gap-[3px] rounded-[2px] pl-[8px] text-white', className)}>{children}</div>;
}

function GreenE() {
  return (
    <svg width="12" height="12" viewBox="0 0 12 12"><circle cx="6" cy="6" r="5.500" fill="#74c044" /><path d="M3 6h6a3 3 0 1 0-1 2.300" fill="none" stroke="#fff" strokeWidth="1.400" /></svg>
  );
}

function Taskbar() {
  return (
    <div className="flex h-[23px] shrink-0 items-center border-t border-[#5f93ef] bg-linear-to-b from-[#3273e8] via-[#2359d9] to-[#2053cd]">
      <div className="flex h-full w-[76px] items-center gap-[7px] rounded-r-[6px] bg-linear-to-b from-[#5fb05d] via-[#399439] to-[#2f7f30] pl-[8px] text-[14px] text-white italic">
        <svg width="15" height="14" viewBox="0 0 15 14"><path d="M1.500 1.500q3-1.500 5.500 0L6 6.500q-2.500-1.300-5.500 0z" fill="#e5552c" /><path d="M8 2q3 1.200 6 0l-1 5q-3 1.200-6 0z" fill="#86c440" /><path d="M.3 7.500q3-1.300 5.500 0l-1 5Q2.500 11 -.7 12.500z" fill="#4f8fe8" /><path d="M6.700 8q3 1.200 6 0l-1 5q-3 1.200-6 0z" fill="#f7c52e" /></svg>
        <span className="pb-[3px]">开始</span>
      </div>
      <div className="ml-[9px] flex w-[57px] items-center gap-[6px]">
        <GreenE />
        <svg width="12" height="12" viewBox="0 0 12 12"><rect width="12" height="12" rx="1.500" fill="#25a641" /><path d="M8.500 4a3 3 0 1 0 0 4H6" fill="none" stroke="#fff" strokeWidth="1.800" /></svg>
        <svg width="12" height="12" viewBox="0 0 12 12"><path d="M2 2l8-1.500L11 10l-7 1.500-3-3z" fill="#dceafd" stroke="#5583bf" /><path d="M3.500 5q3-2 4 0t-3 3M7 3l3 1" stroke="#3e72b5" fill="none" /></svg>
      </div>
      <Task className="bg-[#3c81f3]"><GreenE /><Txt>5-8 实例:软件下...</Txt></Task>
      <Task className="ml-px bg-[#1e4ba8]">
        <svg width="12" height="12" viewBox="0 0 12 12"><rect width="12" height="12" fill="#5c6b1a" /><text x="1" y="9" fontSize="7" fontWeight="bold" fill="#cbe05a" fontFamily="Liberation Sans">Dw</text></svg>
        <Txt>Adobe Dreamweave...</Txt>
      </Task>
      <Task className="ml-[2px] bg-[#3c81f3]">
        <svg width="10" height="12" viewBox="0 0 10 12"><path d="M2 6h6l-1 6H3z" fill="#e0d8c8" /><path d="M3 6L1 1M5 6V0M7 6l2-5" stroke="#e4a34b" strokeWidth="1.500" /></svg>
        <Txt>表格 - 画图</Txt>
      </Task>
      <svg className="ml-auto" width="12" height="9" viewBox="0 0 12 9"><path d="M1 3l1-2h8l1 2v5H1z" fill="#ddd" stroke="#222" /><path d="M2 4h8M2 6h8" stroke="#333" strokeDasharray="1 1" /></svg>
      <div className="ml-[8px] flex h-full w-[96px] items-center gap-[2px] bg-linear-to-b from-[#35aef5] to-[#0f8ce4] text-white">
        <svg width="12" height="13" viewBox="0 0 12 13"><circle cx="6" cy="6.500" r="5.800" fill="#2b7fe0" stroke="#8fc6f7" strokeWidth=".7" /><path d="M7.500 3.500l-3 3 3 3" stroke="#fff" strokeWidth="1.600" fill="none" /></svg>
        <svg width="14" height="12" viewBox="0 0 14 12"><path d="M1 2h6v5H1zM0 9h8v2H0z" fill="#bcd9f3" stroke="#35618e" strokeWidth=".7" /><path d="M9 2q2 2 0 4M11 1q3 3 0 6" stroke="#7fe060" fill="none" /></svg>
        <svg width="13" height="12" viewBox="0 0 13 12"><path d="M1 3h6v5H1zM4 1h6v5H4z" fill="#35618e" stroke="#1c3252" strokeWidth=".7" /><path d="M6 5l6 6M12 5l-6 6" stroke="#d93a30" strokeWidth="1.800" /></svg>
        <svg width="12" height="12" viewBox="0 0 12 12"><path d="M1 1h10v5q-1 4-5 5.500Q2 10 1 6z" fill="#eaf4ff" /><path d="M3 4l3 3 3-3" stroke="#2a78c8" strokeWidth="1.600" fill="none" /></svg>
        <Txt className="ml-[3px]">20:47</Txt>
      </div>
    </div>
  );
}

function Watermark() {
  return (
    <svg className="absolute top-[510px] left-[765px]" width="190" height="95" viewBox="0 0 190 95" fill="#fff" fillOpacity=".85" stroke="#bdbdbd" strokeWidth=".8">
      <text x="3" y="64" fontSize="37" fontWeight="bold" fontFamily="Liberation Sans" textLength="58" lengthAdjust="spacingAndGlyphs">Bai</text>
      <ellipse cx="66" cy="30" rx="6.500" ry="8.500" />
      <ellipse cx="78" cy="17" rx="6.500" ry="8.500" />
      <ellipse cx="94" cy="18" rx="6.500" ry="8.500" />
      <ellipse cx="103" cy="33" rx="6.500" ry="8.500" />
      <path d="M84 31c6 0 8 6 13 11 6 5 9 9 7 15s-8 8-13 7-7-1-12 0-13-1-14-7 2-11 8-16c4-4 5-10 11-10z" />
      <text x="73" y="58" fontSize="22" fontWeight="bold" fontFamily="Liberation Sans" fill="#e6e6e6" textLength="24">du</text>
      <text x="117" y="60" fontSize="30" fontWeight="bold" fontFamily="Noto Sans CJK SC" textLength="60">经验</text>
      <text x="5" y="86" fontSize="20" fontFamily="Open Sans" stroke="none" textLength="175">jingyan.baidu.com</text>
    </svg>
  );
}

// Callout boxes and pointer lines drawn over both dialogs
function Annotations() {
  return (
    <svg className="absolute top-0 left-0" width="1000" height="625" viewBox="0 0 1000 625" fill="none" stroke="#000">
      <rect x="29.500" y="195.500" width="77" height="15" strokeWidth="2.500" />
      <rect x="162.500" y="283" width="307.500" height="17" strokeWidth="2.500" />
      <rect x="294.500" y="553" width="96.500" height="28.500" strokeWidth="3" />
      <path d="M109 212l102 70M225 302l103 250M470 300l71 14" strokeWidth="2" />
      <path d="M997.500 378v39" stroke="#e8392f" strokeWidth="5" strokeLinecap="round" />
      <circle cx="997" cy="378" r="2" fill="#801a15" stroke="none" />
    </svg>
  );
}

export default function App() {
  return (
    <div className="relative flex h-[625px] w-[1000px] flex-col overflow-hidden bg-[#d8d8d8] font-['Noto_Sans_CJK_SC',sans-serif] text-[9.400px] leading-[12px] text-black">
      <MenuBar />
      <div className="flex min-h-0 flex-1 pb-[2px] pl-[3px]">
        <div className="flex w-[794px] shrink-0 flex-col border-l border-[#666]">
          <DocumentTabs />
          <Toolbars />
          <div className="flex-1 bg-white" />
          <PropertiesPanel />
        </div>
        <BrowserLabPanel />
      </div>
      <Taskbar />
      <PagePropertiesDialog />
      <SelectImageDialog />
      <Annotations />
      <Watermark />
    </div>
  );
}
